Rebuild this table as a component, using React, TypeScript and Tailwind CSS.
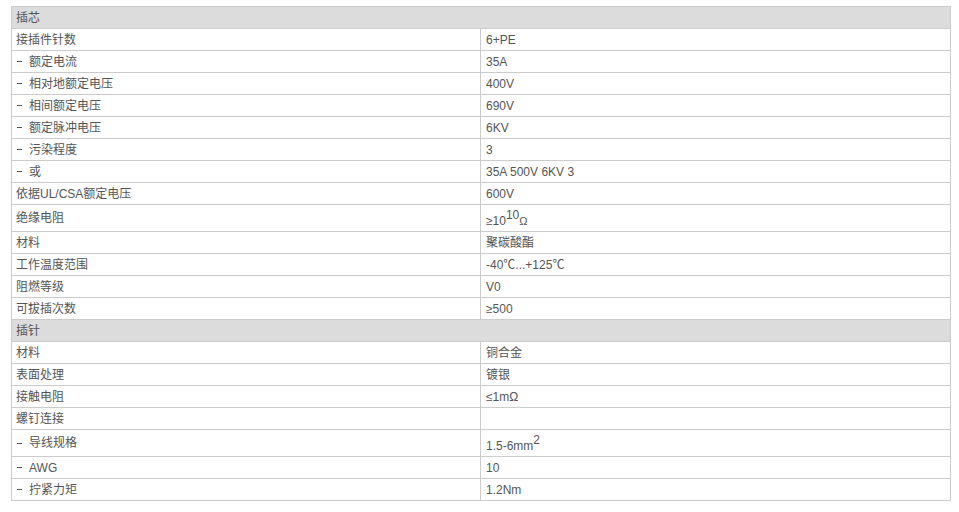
import React from "react";

type Row =
  | { kind: "head"; label: string }
  | { kind: "row"; label: string; sub?: boolean; value: React.ReactNode; tall?: boolean };

const rows: Row[] = [
  { kind: "head", label: "插芯" },
  { kind: "row", label: "接插件针数", value: "6+PE" },
  { kind: "row", label: "额定电流", sub: true, value: "35A" },
  { kind: "row", label: "相对地额定电压", sub: true, value: "400V" },
  { kind: "row", label: "相间额定电压", sub: true, value: "690V" },
  { kind: "row", label: "额定脉冲电压", sub: true, value: "6KV" },
  { kind: "row", label: "污染程度", sub: true, value: "3" },
  { kind: "row", label: "或", sub: true, value: "35A 500V 6KV 3" },
  { kind: "row", label: "依据UL/CSA额定电压", value: "600V" },
  {
    kind: "row",
    label: "绝缘电阻",
    tall: true,
    value: (
      <span>
        ≥10
        <span className="relative top-[-6px] text-[12px]">10</span>
        <span className="text-[11px]">Ω</span>
      </span>
    ),
  },
  { kind: "row", label: "材料", value: "聚碳酸酯" },
  { kind: "row", label: "工作温度范围", value: "-40℃...+125℃" },
  { kind: "row", label: "阻燃等级", value: "V0" },
  { kind: "row", label: "可拔插次数", value: "≥500" },
  { kind: "head", label: "插针" },
  { kind: "row", label: "材料", value: "铜合金" },
  { kind: "row", label: "表面处理", value: "镀银" },
  { kind: "row", label: "接触电阻", value: "≤1mΩ" },
  { kind: "row", label: "螺钉连接", value: "" },
  {
    kind: "row",
    label: "导线规格",
    sub: true,
    tall: true,
    value: (
      <span>
        1.5-6mm
        <span className="relative top-[-6px] text-[12px]">2</span>
      </span>
    ),
  },
  { kind: "row", label: "AWG", sub: true, value: "10" },
  { kind: "row", label: "拧紧力矩", sub: true, value: "1.2Nm" },
];

export default function App() {
  return (
    <div
      className="w-[959px] h-[512px] bg-white pt-[6px] pl-[11px] text-[12px] text-[#555555]"
      style={{ fontFamily: '"Liberation Sans", Arial, "Noto Sans CJK SC", sans-serif' }}
    >
      <div className="w-[940px] border-t border-l border-r border-[#cccccc] flex flex-col">
        {rows.map((r, i) =>
          r.kind === "head" ? (
            <div
              key={i}
              className="h-[22px] border-b border-[#cccccc] bg-[#dcdcdc] flex items-center pl-[4px] leading-none"
            >
              {r.label}
            </div>
          ) : (
            <div
              key={i}
              className={`flex border-b border-[#cccccc] ${r.tall ? "h-[27px]" : "h-[22px]"}`}
            >
              <div className="w-[468px] flex items-center pl-[4px] leading-none">
                {r.sub ? (
                  <>
                    <span className="inline-block w-[5px] h-[1px] bg-[#555555] ml-[1px]" />
                    <span className="ml-[7px]">{r.label}</span>
                  </>
                ) : (
                  r.label
                )}
              </div>
              <div
                className={`w-[470px] border-l border-[#cccccc] flex items-center pl-[5px] leading-none ${
                  r.tall ? "pt-[6px]" : ""
                }`}
              >
                {r.value}
              </div>
            </div>
          )
        )}
      </div>
    </div>
  );
}
